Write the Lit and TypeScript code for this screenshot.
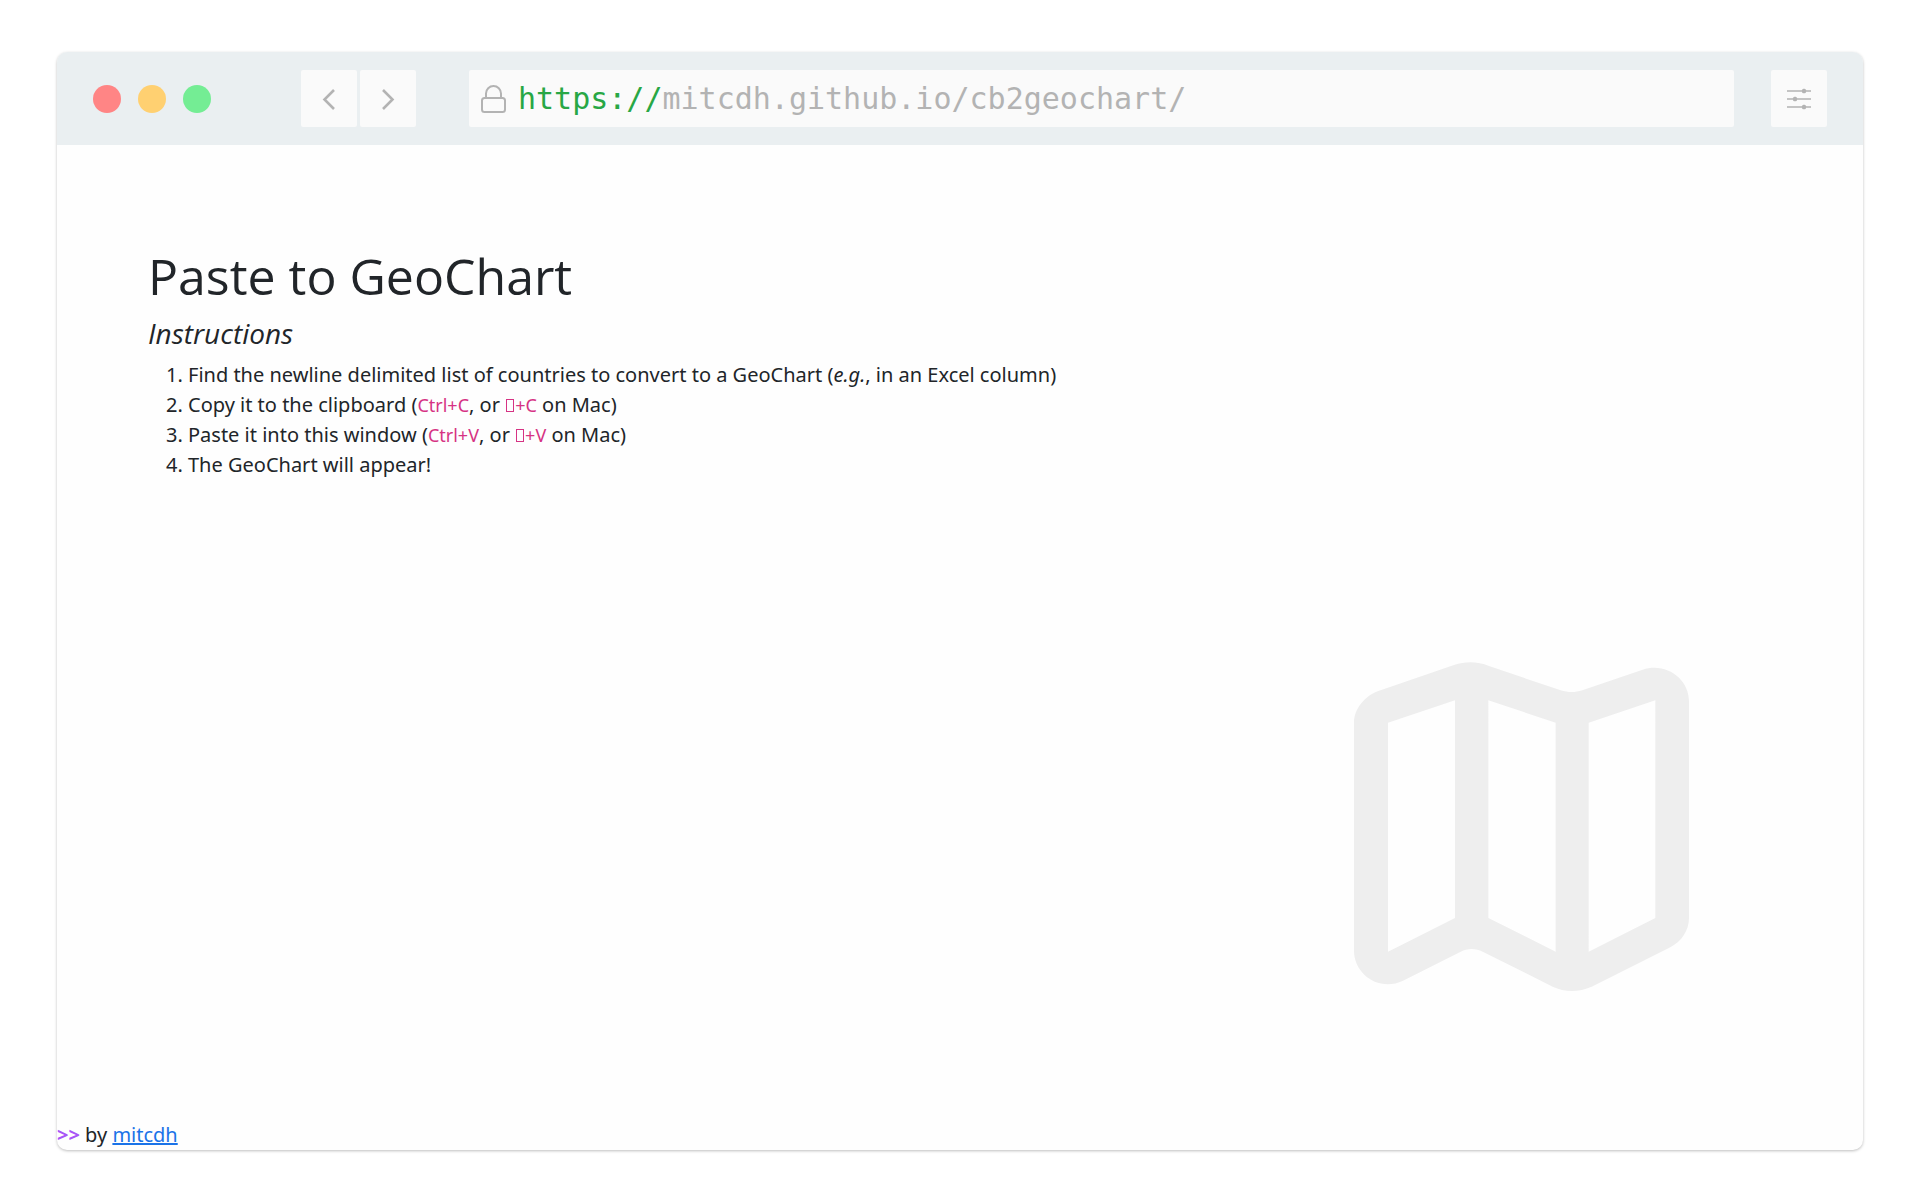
import { LitElement, html, css } from "lit";
import { customElement } from "lit/decorators.js";

@customElement("app-root")
export class AppRoot extends LitElement {
  static styles = css`
    :host {
      display: flex;
      box-sizing: border-box;
      min-height: 100vh;
      padding: 52px 57px 50px;
      background: #fff;
      color: #212529;
      font-family: "Noto Sans", "Open Sans", sans-serif;
      font-size: 20px;
      line-height: 30px;
    }
    .window {
      flex: 1;
      min-width: 0;
      display: flex;
      flex-direction: column;
      border-radius: 10px;
      overflow: hidden;
      background: #fefefe;
      box-shadow: 0 1px 3px rgba(0, 0, 0, 0.26);
    }
    .bar {
      display: flex;
      align-items: center;
      padding: 18px 36px;
      background: #eaeff1;
    }
    .lights {
      display: flex;
      gap: 17px;
      margin-right: 90px;
    }
    .light {
      width: 28px;
      height: 28px;
      border-radius: 50%;
    }
    .red { background: #ff8585; }
    .amber { background: #ffd071; }
    .green { background: #74ed94; }
    .nav {
      display: flex;
      gap: 3px;
      margin-right: 53px;
    }
    .tool {
      display: flex;
      align-items: center;
      justify-content: center;
      width: 56px;
      height: 57px;
      padding: 0;
      border: 0;
      border-radius: 2px;
      background: #fafafa;
      color: #b3b3b3;
    }
    .address {
      flex: 1;
      min-width: 0;
      display: flex;
      align-items: center;
      gap: 12px;
      height: 57px;
      margin-right: 37px;
      padding: 0 12px;
      box-sizing: border-box;
      border-radius: 2px;
      background: #fafafa;
      color: #b3b3b3;
      font-family: "DejaVu Sans Mono", monospace;
      font-size: 30px;
      white-space: nowrap;
    }
    .scheme { color: #28a745; }
    .page {
      flex: 1;
      display: flex;
      flex-direction: column;
      padding: 101px 174px 129px 91px;
    }
    h1, h2 {
      margin: 0 0 10px;
      font-family: "Open Sans", "Noto Sans", sans-serif;
      font-weight: 400;
    }
    h1 {
      font-size: 50px;
      line-height: 60px;
    }
    h2 {
      font-size: 28px;
      font-style: italic;
      line-height: 34px;
    }
    ol {
      margin: 0;
      padding-left: 40px;
    }
    kbd {
      color: #d63384;
      font-family: inherit;
      font-size: 18px;
      line-height: 20px;
    }
    .key {
      display: inline-block;
      box-sizing: border-box;
      width: 8px;
      height: 13px;
      margin: 0 1px;
      border: 1px solid currentColor;
    }
    .map {
      align-self: flex-end;
      margin-top: auto;
    }
    .prompt {
      color: #a855f7;
      font-weight: 700;
    }
    a { color: #1a73e8; }
  `;

  render() {
    return html`
      <div class="window">
        <header class="bar">
          <div class="lights">
            <span class="light red"></span>
            <span class="light amber"></span>
            <span class="light green"></span>
          </div>
          <nav class="nav">
            <button class="tool" aria-label="Back">
              <svg width="56" height="56" viewBox="0 0 56 56" fill="none" stroke="currentColor" stroke-width="2.6">
                <path d="M33 19 L23.5 28.5 L33 38" />
              </svg>
            </button>
            <button class="tool" aria-label="Forward">
              <svg width="56" height="56" viewBox="0 0 56 56" fill="none" stroke="currentColor" stroke-width="2.6">
                <path d="M23 19 L32.5 28.5 L23 38" />
              </svg>
            </button>
          </nav>
          <div class="address">
            <svg width="25" height="28" viewBox="0 0 25 28" fill="none" stroke="currentColor" stroke-width="2">
              <rect x="1" y="13" width="23" height="14" rx="2.5" />
              <path d="M5 13 V8.5 A7.5 7.5 0 0 1 20 8.5 V13" />
            </svg>
            <span><span class="scheme">https://</span>mitcdh.github.io/cb2geochart/</span>
          </div>
          <button class="tool" aria-label="Settings">
            <svg width="24" height="22" viewBox="0 0 24 22" fill="currentColor">
              <path d="M0 2.2h24v1.6H0z M0 10.2h24v1.6H0z M0 18.2h24v1.6H0z" />
              <rect x="15" y="0.8" width="4" height="4.4" rx="1.5" />
              <rect x="6" y="8.8" width="4" height="4.4" rx="1.5" />
              <rect x="15" y="16.8" width="4" height="4.4" rx="1.5" />
            </svg>
          </button>
        </header>
        <main class="page">
          <h1>Paste to GeoChart</h1>
          <h2>Instructions</h2>
          <ol>
            <li>Find the newline delimited list of countries to convert to a GeoChart (<em>e.g.</em>, in an Excel column)</li>
            <li>Copy it to the clipboard (<kbd>Ctrl+C</kbd>, or <kbd><span class="key"></span>+C</kbd> on Mac)</li>
            <li>Paste it into this window (<kbd>Ctrl+V</kbd>, or <kbd><span class="key"></span>+V</kbd> on Mac)</li>
            <li>The GeoChart will appear!</li>
          </ol>
          <svg class="map" width="335" height="329" viewBox="72 66 1005 987" fill="#eee" fill-rule="evenodd" aria-hidden="true">
            <path d="M72 248 C72 207 104 169 143 154 L372 75 C407 64 442 64 477 78 L692 151 C715 158 735 158 757 151 L938 89 C1010 66 1077 118 1077 184 V834 C1077 871 1055 904 1021 922 L785 1040 C747 1057 704 1057 668 1040 L458 935 C438 924 412 924 392 935 L219 1022 C148 1056 72 1003 72 932 Z
              M174 248 V935 L375 834 V181 Z
              M475 181 V834 L677 935 V248 Z
              M776 248 V935 L976 834 V181 Z" />
          </svg>
        </main>
        <footer><span class="prompt">&gt;&gt;</span> by <a href="https://github.com/mitcdh">mitcdh</a></footer>
      </div>
    `;
  }
}
